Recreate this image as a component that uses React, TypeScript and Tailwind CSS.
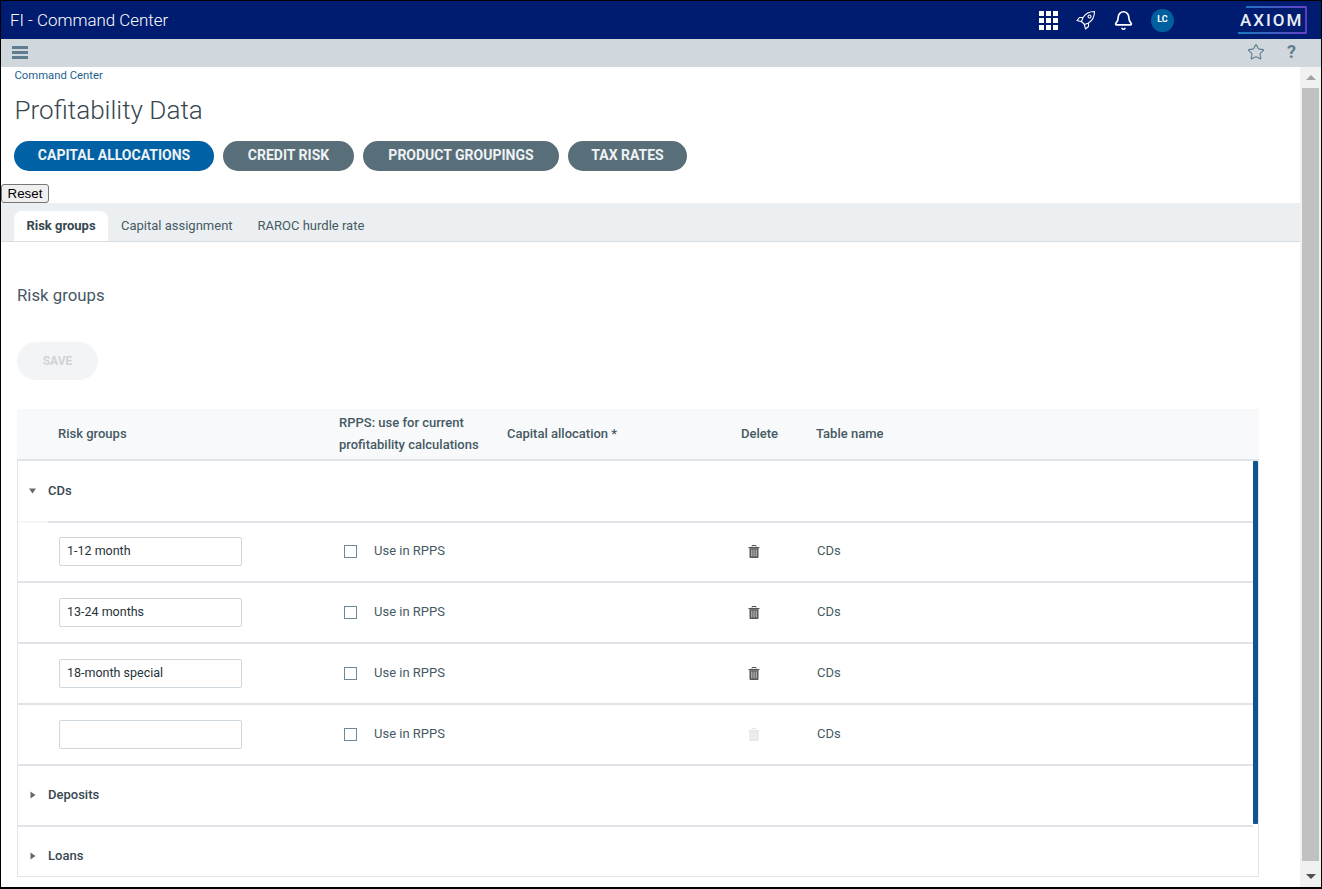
import { Bell, Star } from "lucide-react";

const Trash = ({ faded = false }: { faded?: boolean }) => (
  <svg width="12" height="13" viewBox="0 0 12 13" className={faded ? "opacity-15" : ""}>
    <path d="M4 1.5V.5h4v1" fill="none" stroke="#555" strokeWidth="1" />
    <path d="M.5 2h11v1.2H.5z" fill="#555" />
    <path d="M1.5 3.2h9V12a1 1 0 0 1-1 1h-7a1 1 0 0 1-1-1z" fill="#555" />
    <path d="M3 4.5h1.5v7H3zM5.3 4.5h1.5v7H5.3zM7.6 4.5h1.5v7H7.6z" fill="#a8a8a8" />
  </svg>
);

const Row = ({ value, faded = false }: { value: string; faded?: boolean }) => (
  <div className="flex h-[61px] shrink-0 items-center border-b-2 border-[#e1e5ea] pb-px">
    <div className="w-[322px] pl-[41px]">
      <div className="flex h-[29px] w-[183px] items-center rounded-[2px] border border-[#ced6de] pl-[7px] pt-px text-[12.5px] text-[#263238]">
        {value}
      </div>
    </div>
    <div className="flex w-[400px] items-center">
      <span className="ml-[4px] h-[13px] w-[13px] border border-[#6f8797]" />
      <span className="ml-[17px] text-[13px] text-[#455a64]">Use in RPPS</span>
    </div>
    <div className="flex w-[77px] justify-start pl-[8px]">
      <Trash faded={faded} />
    </div>
    <span className="text-[13px] text-[#455a64]">CDs</span>
  </div>
);

const Group = ({ label, open = false, last = false }: { label: string; open?: boolean; last?: boolean }) => (
  <div className={`flex shrink-0 items-center pl-[11px] ${last ? "h-[50px] pt-[8px]" : open ? "h-[60px]" : "h-[61px] border-b-2 border-[#e1e5ea] pb-px"}`}>
    <svg width="8" height="8" viewBox="0 0 8 8" className="mr-[11px]">
      {open ? <path d="M0 1.5h7L3.5 6.5z" fill="#5f6a70" /> : <path d="M1.5 .5v7L6.5 4z" fill="#5f6a70" />}
    </svg>
    <span className="text-[13px] font-medium text-[#37474f]">{label}</span>
  </div>
);

const pills = [
  { label: "CAPITAL ALLOCATIONS", cls: "w-[200px] bg-[#0061a5]" },
  { label: "CREDIT RISK", cls: "w-[131px] bg-[#586e79]" },
  { label: "PRODUCT GROUPINGS", cls: "w-[196px] bg-[#586e79]" },
  { label: "TAX RATES", cls: "w-[119px] bg-[#586e79]" },
];

export default function App() {
  return (
    <div className="flex h-[889px] w-[1322px] flex-col overflow-hidden border-x border-t-[1px] border-b-2 border-black bg-white font-['Roboto',sans-serif]">
      {/* Top bar */}
      <header className="flex h-[38px] shrink-0 items-center bg-[#001c71] text-white">
        <span className="ml-[9px] pt-px text-[16.9px] font-light">FI - Command Center</span>
        <div className="ml-auto flex items-center">
          <svg width="19" height="19" viewBox="0 0 19 19" fill="#fff">
            {[0, 7, 14].flatMap((y) =>
              [0, 7, 14].map((x) => <rect key={`${x}-${y}`} x={x} y={y} width="5" height="5" />),
            )}
          </svg>
          <svg width="20" height="20" viewBox="0 0 20 20" fill="none" stroke="#fff" strokeWidth="1.1" strokeLinejoin="round" className="ml-[18px]">
            <path d="M18.5 1.5C14 1.5 9.5 3.5 7 7.5L5.5 11.5l3 3 4-1.5C16.5 10.5 18.5 6 18.5 1.5Z" />
            <path d="M7 7.5H3.5L1 10.5l4.8 1.2" />
            <path d="M12.5 13v3.5L9.5 19l-1.2-4.6" />
            <circle cx="13.5" cy="6.5" r="1.5" />
          </svg>
          <Bell size={21} strokeWidth={1.9} className="ml-[17px]" />
          <span className="ml-[17px] flex h-[23px] w-[23px] items-center justify-center rounded-full bg-[#00609f] text-[9px] font-bold">
            LC
          </span>
          <div className="relative ml-[64px] mr-[14px] flex h-[28px] w-[69px] items-center">
            <span className="pl-[2px] pt-[2px] text-[17px] font-medium tracking-[2px] text-[#e8edf2]">AXIOM</span>
            <svg width="69" height="28" viewBox="0 0 69 28" fill="none" className="absolute left-0 top-0">
              <defs>
                <linearGradient id="axiom" x1="0" x2="1" y1="0" y2="0">
                  <stop offset="0" stopColor="#1e9ad8" />
                  <stop offset="1" stopColor="#8a4fe0" />
                </linearGradient>
              </defs>
              <path d="M8 1h60v26H0" stroke="url(#axiom)" strokeWidth="1.3" />
            </svg>
          </div>
        </div>
      </header>

      {/* Tool bar */}
      <div className="flex h-[28px] shrink-0 items-center bg-[#d0d7dd]">
        <div className="ml-[11px] flex w-[16px] -translate-y-px flex-col gap-[2px]">
          <span className="h-[3px] bg-[#5f7d8f]" />
          <span className="h-[3px] bg-[#5f7d8f]" />
          <span className="h-[3px] bg-[#5f7d8f]" />
        </div>
        <Star size={18} strokeWidth={1.5} className="ml-auto -translate-y-px text-[#5f7d8f]" />
        <span className="ml-[22px] mr-[25px] -translate-y-[2px] text-[18px] font-bold text-[#5f7d8f]">?</span>
      </div>

      <div className="flex min-h-0 flex-1">
        <main className="min-w-0 flex-1 overflow-hidden">
          <div className="pl-[13.5px] pt-[2px] text-[11.3px] leading-[14px] text-[#1d5f8f]">Command Center</div>
          <h1 className="pl-[13.5px] pt-[8px] text-[26.1px] font-light leading-[38px] text-[#37474f]">Profitability Data</h1>
          <div className="flex gap-[9px] pl-[13px] pt-[12px]">
            {pills.map((p) => (
              <span
                key={p.label}
                className={`flex h-[30px] items-center justify-center rounded-full pb-px text-[14px] font-bold text-[#eef2f4] ${p.cls}`}
              >
                {p.label}
              </span>
            ))}
          </div>
          <button className="mt-[13px] block h-[19px] w-[48px] rounded-[3px] border border-[#767676] bg-[#efefef] font-['Liberation_Sans',sans-serif] text-[13.33px] leading-[15px] text-black">
            Reset
          </button>

          {/* Tabs */}
          <div className="flex h-[39px] items-end border-b border-[#d8dde1] bg-[#eceff1] pl-[13px] text-[13px] text-[#455a64]">
            <span className="flex h-[30px] w-[94px] items-center justify-center rounded-t-[8px] bg-white pb-px font-bold text-[#37474f]">
              Risk groups
            </span>
            <span className="flex h-[31px] items-center pl-[13px]">Capital assignment</span>
            <span className="flex h-[31px] items-center pl-[25px]">RAROC hurdle rate</span>
          </div>

          <div className="pl-[16px] pt-[43px]">
            <h2 className="text-[16.8px] leading-[20px] text-[#455a64]">Risk groups</h2>
            <div className="mt-[37px] flex h-[38px] w-[81px] items-center justify-center rounded-full bg-[#f2f4f6] text-[12px] font-bold text-[#cfd4d8]">
              SAVE
            </div>

            {/* Table */}
            <div className="relative mt-[29px] w-[1242px]">
              <div className="flex h-[52px] items-center border-b-2 border-[#e1e5ea] bg-[#f8f9fa] text-[13px] font-medium leading-[22px] text-[#455a64]">
                <span className="w-[322px] pl-[41px]">Risk groups</span>
                <span className="w-[168px]">
                  RPPS: use for current
                  <br />
                  profitability calculations
                </span>
                <span className="w-[234px]">Capital allocation *</span>
                <span className="w-[75px]">Delete</span>
                <span>Table name</span>
              </div>
              <div className="h-[416px] border-x border-b border-[#e1e5ea] pr-[5px]">
                <Group label="CDs" open />
                <div className="-mb-px flex h-[2px]">
                  <span className="w-[30px] bg-[#f5f6f8]" />
                  <span className="flex-1 bg-[#e1e5ea]" />
                </div>
                <Row value="1-12 month" />
                <Row value="13-24 months" />
                <Row value="18-month special" />
                <Row value="" faded />
                <Group label="Deposits" />
                <Group label="Loans" last />
              </div>
              <div className="absolute right-[1px] top-[52px] h-[363px] w-[5px] rounded-[1px] bg-[#0f5390]" />
            </div>
          </div>
        </main>

        {/* Page scrollbar */}
        <div className="flex w-[21px] shrink-0 flex-col items-center bg-[#f1f1f1]">
          <svg width="10" height="21" viewBox="0 0 10 21" className="shrink-0"><path d="M0 13h10L5 8z" fill="#a3a3a3" /></svg>
          <div className="h-[773px] w-[17px] shrink-0 bg-[#c1c1c1]" />
          <svg width="10" height="26" viewBox="0 0 10 26" className="mt-auto shrink-0"><path d="M0 13h10l-5 5z" fill="#505050" /></svg>
        </div>
      </div>
    </div>
  );
}
